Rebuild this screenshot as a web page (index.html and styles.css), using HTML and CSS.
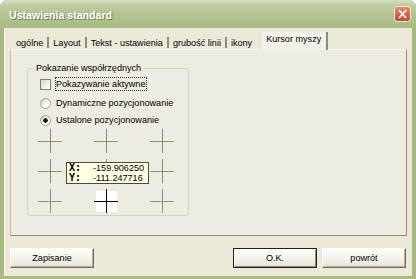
FILE: index.html
```html
<!DOCTYPE html>
<html lang="pl">

<head>
    <meta charset="UTF-8">
    <title>Ustawienia standard</title>
    <link rel="stylesheet" href="styles.css">
</head>

<body>
    <div class="window">
        <div class="titlebar">
            <span class="title">Ustawienia standard</span>
            <span class="close">
                <svg width="17" height="16" viewBox="0 0 17 16">
                    <defs>
                        <linearGradient id="closeFill" x1="0" y1="0" x2="0" y2="1">
                            <stop offset="0" stop-color="#e58a64"/>
                            <stop offset="1" stop-color="#c4482a"/>
                        </linearGradient>
                    </defs>
                    <rect x="0.5" y="0.5" width="16" height="15" rx="3" fill="url(#closeFill)" stroke="#f3eee3"/>
                    <path d="M5 4l7 8M12 4l-7 8" stroke="#fff" stroke-width="1.8"/>
                </svg>
            </span>
        </div>

        <div class="body">
            <!-- tab strip -->
            <div class="tabs">
                <span class="tab">ogólne</span>
                <span class="tab">Layout</span>
                <span class="tab">Tekst - ustawienia</span>
                <span class="tab">grubość linii</span>
                <span class="tab tab_plain">ikony</span>
                <span class="tab tab_active">Kursor myszy</span>
            </div>

            <div class="panel">
                <fieldset class="group">
                    <legend>Pokazanie współrzędnych</legend>
                    <div class="row row_first">
                        <span class="checkbox"></span>
                        <span class="focus">Pokazywanie aktywne</span>
                    </div>
                    <div class="row row_second">
                        <span class="radio"></span>
                        <span>Dynamiczne pozycjonowanie</span>
                    </div>
                    <div class="row row_third">
                        <span class="radio radio_checked"></span>
                        <span>Ustalone pozycjonowanie</span>
                    </div>

                    <!-- cursor position preview -->
                    <div class="cross_grid">
                        <span class="cross"></span>
                        <span class="cross"></span>
                        <span class="cross"></span>
                        <span class="cross"></span>
                        <span class="cross"></span>
                        <span class="cross"></span>
                        <span class="cross"></span>
                        <span class="cross cross_active"></span>
                        <span class="cross"></span>
                        <div class="tooltip">
                            <div class="tip_line"><b>X:</b><span>-159.906250</span></div>
                            <div class="tip_line"><b>Y:</b><span>-111.247716</span></div>
                        </div>
                    </div>
                </fieldset>
            </div>

            <div class="buttons">
                <button type="button" class="btn">Zapisanie</button>
                <button type="button" class="btn btn_default">O.K.</button>
                <button type="button" class="btn">powrót</button>
            </div>
        </div>
    </div>
</body>

</html>
```

FILE: styles.css
```css
/* Reset */
html,
body {
    margin: 0;
    padding: 0;
    background: #ffffff;
}

body {
    font-family: "Liberation Sans", Arial, sans-serif;
    font-size: 9.1px;
    color: #000000;
}

.window {
    width: 416px;
    height: 279px;
    display: flex;
    flex-direction: column;
    background: #a8ba82;
    border-radius: 7px 7px 0 0;
    overflow: hidden;
}

/* Title bar */
.titlebar {
    height: 28px;
    flex: none;
    display: flex;
    align-items: center;
    justify-content: space-between;
    padding: 1px 5px 0 9px;
    box-sizing: border-box;
    background: linear-gradient(#d6e1c0, #bfcda2 18%, #b1c290 55%, #a9bb83);
}

.title {
    font-size: 10.6px;
    font-weight: bold;
    color: #ffffff;
    text-shadow: 1px 1px 0 #6f7f4c;
}

.close {
    display: flex;
    margin-top: -1px;
}

/* Dialog body */
.body {
    flex: 1;
    display: flex;
    flex-direction: column;
    margin: 0 4px 3px;
    padding: 4px 5px 0 6px;
    background: #ece9d8;
    box-shadow: inset 1px 0 #f6f5ee;
}

/* Tabs */
.tabs {
    height: 17px;
    display: flex;
    align-items: flex-end;
    padding-left: 2px;
}

.tab {
    height: 15px;
    box-sizing: border-box;
    padding: 4px 6px 0 4px;
    line-height: 11px;
    white-space: nowrap;
    background: linear-gradient(#8e8c7c, #8e8c7c) right bottom 1px / 2px 11px no-repeat;
}

.tab_plain {
    background: none;
}

.tab_active {
    position: relative;
    z-index: 1;
    height: 18px;
    margin: 0 0 -1px 2px;
    padding: 2px 5px 0 5px;
    background: #f3f2ea;
    border-left: 1px solid #dedccf;
    border-right: 2px solid #8e8c7c;
}

/* Tab page */
.panel {
    height: 187px;
    box-sizing: border-box;
    border: 1px solid;
    border-color: #f7f6f0 #8e8c7d #8e8c7d #bdbbab;
    background: #eeece1;
}

.group {
    width: 162px;
    box-sizing: border-box;
    margin: 13px 0 0 16px;
    padding: 0 0 1px 12px;
    border: 1px solid #d2d0c0;
    border-radius: 3px;
}

.group legend {
    margin-left: -6px;
    padding: 0 2px;
    line-height: 11px;
}

.row {
    height: 14px;
    display: flex;
    align-items: center;
    white-space: nowrap;
}

.row_first {
    margin-top: 3px;
}

.row_second {
    margin-top: 5px;
}

.row_third {
    margin-top: 3px;
}

.checkbox {
    width: 11px;
    height: 11px;
    box-sizing: border-box;
    margin-right: 4px;
    border: 1px solid #7f7e70;
    background: linear-gradient(135deg, #d9d8cc, #ffffff);
}

.focus {
    height: 14px;
    box-sizing: border-box;
    padding: 0 1px 0 0;
    line-height: 12px;
    border: 1px dotted #333333;
}

.radio {
    width: 11px;
    height: 11px;
    box-sizing: border-box;
    margin-right: 5px;
    border-radius: 50%;
    border: 1px solid #a3a293;
    background: linear-gradient(135deg, #cfcec2, #ffffff 70%);
}

.radio_checked {
    background: radial-gradient(circle, #1e1e1e 0 2px, transparent 2.5px), linear-gradient(135deg, #cfcec2, #ffffff 70%);
}

/* Cursor preview */
.cross_grid {
    position: relative;
    display: grid;
    grid-template-columns: repeat(3, 26px);
    grid-auto-rows: 26px;
    column-gap: 30px;
    row-gap: 4px;
    margin: 1px 0 0 -3px;
}

.cross {
    background:
        linear-gradient(#8f8d7d, #8f8d7d) 1px 13px / 24px 1px no-repeat,
        linear-gradient(#8f8d7d, #8f8d7d) 13px 1px / 1px 24px no-repeat;
}

.cross_active {
    background:
        linear-gradient(#000000, #000000) 1px 13px / 24px 1px no-repeat,
        linear-gradient(#000000, #000000) 13px 1px / 1px 24px no-repeat,
        linear-gradient(#ffffff, #ffffff) 3px 3px / 21px 21px no-repeat;
}

.tooltip {
    position: absolute;
    left: 29px;
    top: 34px;
    width: 83px;
    height: 22px;
    box-sizing: border-box;
    padding-left: 2px;
    background: #ffffe1;
    border: 1px solid #4a4a3e;
}

.tip_line {
    display: flex;
    height: 10px;
    line-height: 10px;
}

.tip_line b {
    width: 24px;
    font-family: "DejaVu Sans Mono", monospace;
    font-size: 10px;
}

/* Bottom buttons */
.buttons {
    display: flex;
    margin-top: 12px;
    padding-right: 1px;
}

.btn {
    width: 84px;
    height: 20px;
    padding: 0;
    font-family: inherit;
    font-size: 9.1px;
    color: #000000;
    background: linear-gradient(#fdfdfa, #efeee6 70%, #e4e2d6);
    border: 1px solid;
    border-color: #fbfbf7 #6e6d60 #6e6d60 #fbfbf7;
    box-shadow: inset -1px -1px #b3b1a2;
}

.btn_default {
    margin-left: auto;
    margin-right: 5px;
    border-color: #1f1f1f;
    box-shadow: inset 1px 1px #ffffff, inset -1px -1px #8a897b;
}
```
